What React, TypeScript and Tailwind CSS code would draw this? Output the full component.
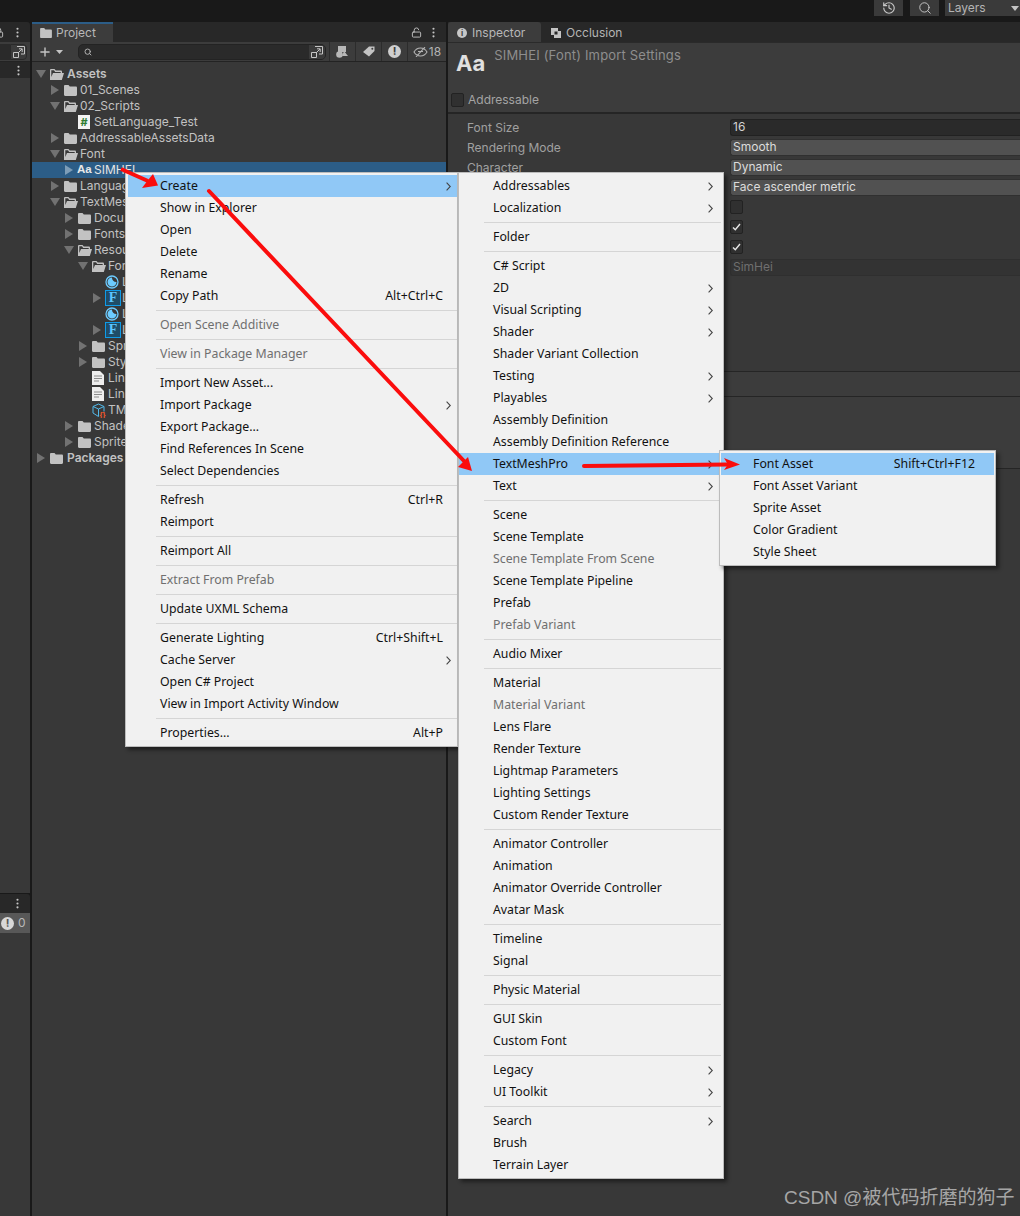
import { Fragment } from "react";
import { History, Search, Lock, LockOpen, MoreVertical, Plus } from "lucide-react";

type Item = { t: string; sub?: boolean; off?: boolean; on?: boolean; key?: string } | "-";

const rootMenu: Item[] = [
  { t: "Create", sub: true, on: true },
  { t: "Show in Explorer" },
  { t: "Open" },
  { t: "Delete" },
  { t: "Rename" },
  { t: "Copy Path", key: "Alt+Ctrl+C" },
  "-",
  { t: "Open Scene Additive", off: true },
  "-",
  { t: "View in Package Manager", off: true },
  "-",
  { t: "Import New Asset..." },
  { t: "Import Package", sub: true },
  { t: "Export Package..." },
  { t: "Find References In Scene" },
  { t: "Select Dependencies" },
  "-",
  { t: "Refresh", key: "Ctrl+R" },
  { t: "Reimport" },
  "-",
  { t: "Reimport All" },
  "-",
  { t: "Extract From Prefab", off: true },
  "-",
  { t: "Update UXML Schema" },
  "-",
  { t: "Generate Lighting", key: "Ctrl+Shift+L" },
  { t: "Cache Server", sub: true },
  { t: "Open C# Project" },
  { t: "View in Import Activity Window" },
  "-",
  { t: "Properties...", key: "Alt+P" },
];

const createMenu: Item[] = [
  { t: "Addressables", sub: true },
  { t: "Localization", sub: true },
  "-",
  { t: "Folder" },
  "-",
  { t: "C# Script" },
  { t: "2D", sub: true },
  { t: "Visual Scripting", sub: true },
  { t: "Shader", sub: true },
  { t: "Shader Variant Collection" },
  { t: "Testing", sub: true },
  { t: "Playables", sub: true },
  { t: "Assembly Definition" },
  { t: "Assembly Definition Reference" },
  { t: "TextMeshPro", sub: true, on: true },
  { t: "Text", sub: true },
  "-",
  { t: "Scene" },
  { t: "Scene Template" },
  { t: "Scene Template From Scene", off: true },
  { t: "Scene Template Pipeline" },
  { t: "Prefab" },
  { t: "Prefab Variant", off: true },
  "-",
  { t: "Audio Mixer" },
  "-",
  { t: "Material" },
  { t: "Material Variant", off: true },
  { t: "Lens Flare" },
  { t: "Render Texture" },
  { t: "Lightmap Parameters" },
  { t: "Lighting Settings" },
  { t: "Custom Render Texture" },
  "-",
  { t: "Animator Controller" },
  { t: "Animation" },
  { t: "Animator Override Controller" },
  { t: "Avatar Mask" },
  "-",
  { t: "Timeline" },
  { t: "Signal" },
  "-",
  { t: "Physic Material" },
  "-",
  { t: "GUI Skin" },
  { t: "Custom Font" },
  "-",
  { t: "Legacy", sub: true },
  { t: "UI Toolkit", sub: true },
  "-",
  { t: "Search", sub: true },
  { t: "Brush" },
  { t: "Terrain Layer" },
];

const tmpMenu: Item[] = [
  { t: "Font Asset", on: true, key: "Shift+Ctrl+F12" },
  { t: "Font Asset Variant" },
  { t: "Sprite Asset" },
  { t: "Color Gradient" },
  { t: "Style Sheet" },
];

type Icon = "folder" | "open" | "script" | "font" | "ring" | "sdf" | "doc" | "cube";
type Row = { t: string; l: number; icon: Icon; arrow?: "r" | "d"; bold?: boolean; sel?: boolean };

// labels stop where the context menu covers them
const tree: Row[] = [
  { t: "Assets", l: 0, icon: "open", arrow: "d", bold: true },
  { t: "01_Scenes", l: 1, icon: "folder", arrow: "r" },
  { t: "02_Scripts", l: 1, icon: "open", arrow: "d" },
  { t: "SetLanguage_Test", l: 2, icon: "script" },
  { t: "AddressableAssetsData", l: 1, icon: "folder", arrow: "r" },
  { t: "Font", l: 1, icon: "open", arrow: "d" },
  { t: "SIMHEI", l: 2, icon: "font", arrow: "r", sel: true },
  { t: "Languag", l: 1, icon: "folder", arrow: "r" },
  { t: "TextMes", l: 1, icon: "open", arrow: "d" },
  { t: "Docu", l: 2, icon: "folder", arrow: "r" },
  { t: "Fonts", l: 2, icon: "folder", arrow: "r" },
  { t: "Resou", l: 2, icon: "open", arrow: "d" },
  { t: "For", l: 3, icon: "open", arrow: "d" },
  { t: "L", l: 4, icon: "ring" },
  { t: "L", l: 4, icon: "sdf", arrow: "r" },
  { t: "L", l: 4, icon: "ring" },
  { t: "L", l: 4, icon: "sdf", arrow: "r" },
  { t: "Spr", l: 3, icon: "folder", arrow: "r" },
  { t: "Sty", l: 3, icon: "folder", arrow: "r" },
  { t: "Lin", l: 3, icon: "doc" },
  { t: "Lin", l: 3, icon: "doc" },
  { t: "TM", l: 3, icon: "cube" },
  { t: "Shade", l: 2, icon: "folder", arrow: "r" },
  { t: "Sprite", l: 2, icon: "folder", arrow: "r" },
  { t: "Packages", l: 0, icon: "folder", arrow: "r", bold: true },
];

const indent = ["pl-[4px]", "pl-[18px]", "pl-[32px]", "pl-[46px]", "pl-[60px]"];

function TreeIcon({ kind }: { kind: Icon }) {
  if (kind === "folder")
    return (
      <svg width="13" height="11" viewBox="0 0 13 11" fill="#c2c2c2">
        <path d="M0 1.2C0 .5.5 0 1.2 0h3.3l1.3 1.6h6c.7 0 1.2.5 1.2 1.2v7c0 .7-.5 1.2-1.2 1.2H1.2C.5 11 0 10.500 0 9.800z" />
      </svg>
    );
  if (kind === "open")
    return (
      <svg width="14" height="11" viewBox="0 0 14 11" fill="#c2c2c2">
        <path d="M0 1.200C0 .5.500 0 1.200 0h3.300l1.300 1.600h5c.7 0 1.200.5 1.200 1.200V4h-1.300V3H5.200L4 1.300H1.300V8L3 4h11l-2.200 7H0z" />
      </svg>
    );
  if (kind === "font")
    return <span className="-ml-[1px] font-['Liberation_Sans'] text-[11.5px] font-bold leading-none text-[#e8e8e8]">Aa</span>;
  if (kind === "script")
    return (
      <span className="flex h-[14px] w-[12px] items-center justify-center bg-[#f4f4f4] text-[11px] font-bold leading-none text-[#2e7d32]">#</span>
    );
  if (kind === "ring")
    return (
      <svg width="14" height="14" viewBox="0 0 14 14">
        <circle cx="7" cy="7" r="6" fill="none" stroke="#6ccbff" strokeWidth="1.300" />
        <path d="M7 2.500a4.500 4.500 0 1 0 4.500 4.500A4.200 4.200 0 0 1 7 2.500z" fill="#6ccbff" />
      </svg>
    );
  if (kind === "sdf")
    return (
      <span className="flex h-[16px] w-[16px] items-center justify-center border border-[#0f9be8] bg-[#1f4d68] font-['Liberation_Serif'] text-[14px] font-bold leading-none text-[#5cc6ff]">F</span>
    );
  if (kind === "doc")
    return (
      <svg width="12" height="14" viewBox="0 0 12 14">
        <path d="M0 0h8l4 4v10H0z" fill="#eeeeee" />
        <path d="M2 5h8M2 7.500h8M2 10h5" stroke="#8a8a8a" strokeWidth="1" />
      </svg>
    );
  return (
    <svg width="16" height="15" viewBox="0 0 16 15">
      <path d="M1 3.500 6.500 1 12 3.500v5M1 3.500V10l5.500 3.500V6zM6.500 6 12 3.500" fill="none" stroke="#52b8ea" strokeWidth="1" />
      <text x="7.500" y="14" fontSize="8" fontWeight="700" fill="#f0592b" fontFamily="Liberation Sans">{"{}"}</text>
    </svg>
  );
}

function TreeRow({ row }: { row: Row }) {
  return (
    <div className={`flex h-4 items-center ${indent[row.l]} ${row.sel ? "bg-[#2c5d87] text-[#e4e4e4]" : ""}`}>
      <span className="flex w-[14px] shrink-0 items-center">
        {row.arrow === "r" && (
          <svg width="8" height="10" viewBox="0 0 8 10" className="ml-[1px]"><path d="M0 0l8 5-8 5z" fill={row.sel ? "#7d9db8" : "#727272"} /></svg>
        )}
        {row.arrow === "d" && (
          <svg width="10" height="8" viewBox="0 0 10 8"><path d="M0 0h10L5 8z" fill="#727272" /></svg>
        )}
      </span>
      <span className={`flex shrink-0 items-center ${row.l === 4 ? "-ml-[1px] w-[17px]" : row.bold ? "w-[17px]" : "w-[16px]"}`}>
        <TreeIcon kind={row.icon} />
      </span>
      <span className={`whitespace-nowrap ${row.bold ? "font-semibold" : ""}`}>{row.t}</span>
    </div>
  );
}

function Chevron({ className = "" }: { className?: string }) {
  return (
    <svg width="5" height="9" viewBox="0 0 5 9" className={`shrink-0 ${className}`}>
      <path d="M.6.6 4.300 4.500.6 8.400" fill="none" stroke="#444444" strokeWidth="1.100" />
    </svg>
  );
}

function Menu({ items, box, rowPad, sepPad, chevron = "" }: { items: Item[]; box: string; rowPad: string; sepPad: string; chevron?: string }) {
  return (
    <div className={`absolute border border-[#bcbcbc] bg-[#f1f1f1] py-[2px] font-['Noto_Sans'] text-[12.3px] text-[#111111] shadow-[3px_3px_4px_rgba(0,0,0,0.45)] ${box}`}>
      {items.map((it, i) =>
        it === "-" ? (
          <div key={i} className={`flex h-[7px] items-center ${sepPad}`}>
            <div className="h-[1px] w-full bg-[#d5d5d5]" />
          </div>
        ) : (
          <div key={i} className={`flex h-[22px] items-center justify-between leading-none ${rowPad} ${it.on ? "bg-[#90c8f6]" : ""} ${it.off ? "text-[#6f6f6f]" : ""}`}>
            <span className="whitespace-nowrap">{it.t}</span>
            {it.key && <span className="whitespace-nowrap">{it.key}</span>}
            {it.sub && <Chevron className={chevron} />}
          </div>
        )
      )}
    </div>
  );
}

function Check({ on }: { on?: boolean }) {
  return (
    <div className="flex h-[14px] w-[13px] items-center justify-center rounded-[2px] border border-[#222222] bg-[#303030]">
      {on && (
        <svg width="9" height="8" viewBox="0 0 9 8"><path d="M1 4.500 3.300 6.800 8 1" fill="none" stroke="#e4e4e4" strokeWidth="1.400" /></svg>
      )}
    </div>
  );
}

function PopoutBtn({ box }: { box: string }) {
  return (
    <div className={`flex items-center justify-center ${box}`}>
      <svg width="12" height="12" viewBox="0 0 12 12" fill="none" stroke="#c4c4c4" strokeWidth="1">
        <path d="M4 .5h7.500V8H8M.5 6.500h5v5h-5zM5 7l4-4M6 2.800h3.200V6" />
      </svg>
    </div>
  );
}

const fieldBox = "flex h-[17px] items-center rounded-l-[3px] border border-r-0 pl-[2px]";
const rows: { label?: string; el: React.ReactNode }[] = [
  { label: "Font Size", el: <div className={`${fieldBox} border-[#212121] bg-[#2a2a2a] text-[#d2d2d2]`}>16</div> },
  { label: "Rendering Mode", el: <div className={`${fieldBox} border-[#303030] bg-[#515151] text-[#dcdcdc]`}>Smooth</div> },
  { label: "Character", el: <div className={`${fieldBox} border-[#303030] bg-[#515151] text-[#dcdcdc]`}>Dynamic</div> },
  { el: <div className={`${fieldBox} border-[#303030] bg-[#515151] text-[#dcdcdc]`}>Face ascender metric</div> },
  { el: <Check /> },
  { el: <Check on /> },
  { el: <Check on /> },
  { el: <div className={`${fieldBox} border-[#2f2f2f] bg-[#333333] text-[#6f6f6f]`}>SimHei</div> },
];

export default function App() {
  return (
    <div className="relative flex h-[1216px] w-[1020px] flex-col overflow-hidden bg-[#191919] font-['Inter'] text-[12px] text-[#c2c2c2]">
      {/* top toolbar */}
      <div className="flex h-[22px] shrink-0 items-start justify-end">
        <div className="flex h-[16px] w-[29px] items-center justify-center bg-[#3a3a3a]"><History size={14} strokeWidth={2} color="#c8c8c8" /></div>
        <div className="ml-[7px] flex h-[16px] w-[29px] items-center justify-center bg-[#3a3a3a]"><Search size={14} strokeWidth={1.600} color="#c8c8c8" /></div>
        <div className="ml-[6px] flex h-[16px] w-[75px] items-center justify-between bg-[#3a3a3a] pl-[3px] pr-[1px] text-[#b4b4b4]">
          <span>Layers</span>
          <svg width="8" height="5" viewBox="0 0 8 5"><path d="M0 0h8L4 5z" fill="#c4c4c4" /></svg>
        </div>
      </div>

      <div className="flex min-h-0 flex-1">
        {/* cut-off hierarchy column */}
        <div className="flex w-[30px] shrink-0 flex-col">
          <div className="flex h-[20px] items-center justify-between rounded-tr-[3px] bg-[#282828] pr-[6px]">
            <span className="-ml-[7px]"><Lock size={11} color="#c4c4c4" /></span>
            <MoreVertical size={13} color="#c4c4c4" />
          </div>
          <div className="flex h-[20px] items-center border-b border-[#232323] bg-[#3c3c3c] pr-[3px]">
            <div className="h-[16px] flex-1 bg-[#2a2a2a]" />
            <PopoutBtn box="h-[16px] w-[17px] rounded-r-[4px] border border-[#2a2a2a]" />
          </div>
          <div className="flex h-[16px] items-center justify-end bg-[#282828] pr-[5px]">
            <MoreVertical size={13} color="#c4c4c4" />
          </div>
          <div className="h-[815px] bg-[#383838]" />
          <div className="h-[1px] bg-[#191919]" />
          <div className="flex h-[19px] items-center justify-end rounded-tr-[3px] bg-[#282828] pr-[6px]">
            <MoreVertical size={13} color="#c4c4c4" />
          </div>
          <div className="flex h-[20px] items-center gap-[4px] bg-[#585858] pl-[1px] text-[#b8b8b8]">
            <span className="flex h-[13px] w-[13px] items-center justify-center rounded-full bg-[#d8d8d8] text-[11px] font-bold leading-none text-[#585858]">!</span>
            <span>0</span>
          </div>
          <div className="flex-1 bg-[#383838]" />
        </div>

        {/* project */}
        <div className="ml-[2px] flex w-[414px] shrink-0 flex-col">
          <div className="flex h-[20px] items-stretch justify-between bg-[#282828]">
            <div className="flex w-[81px] items-center gap-[4px] border-t-2 border-[#2c5d87] bg-[#3c3c3c] pl-[8px] text-[#b8b8b8]">
              <svg width="12" height="10" viewBox="0 0 13 11" fill="#c2c2c2"><path d="M0 1.200C0 .5.500 0 1.200 0h3.300l1.300 1.600h6c.7 0 1.200.5 1.200 1.200v7c0 .7-.5 1.200-1.200 1.200H1.200C.5 11 0 10.500 0 9.800z" /></svg>
              <span>Project</span>
            </div>
            <div className="flex items-center gap-[5px] pr-[6px]">
              <LockOpen size={11} color="#c4c4c4" />
              <MoreVertical size={13} color="#c4c4c4" />
            </div>
          </div>
          <div className="flex h-[20px] items-center border-b border-[#232323] bg-[#3c3c3c]">
            <span className="ml-[6px]"><Plus size={14} strokeWidth={2.400} color="#c4c4c4" /></span>
            <svg width="7" height="4" viewBox="0 0 7 4" className="ml-[4px]"><path d="M0 0h7L3.500 4z" fill="#c4c4c4" /></svg>
            <div className="ml-[15px] flex h-[16px] w-[248px] items-center justify-between rounded-[5px] border border-[#232323] bg-[#2a2a2a] pl-[5px]">
              <Search size={8} strokeWidth={3} color="#b0b0b0" />
              <PopoutBtn box="h-[14px] w-[16px] bg-[#3a3a3a] rounded-r-[4px]" />
            </div>
            <div className="ml-[3px] flex h-full w-[26px] items-center justify-center border-l border-[#2c2c2c]">
              <svg width="13" height="12" viewBox="0 0 13 12" fill="#b8b8b8"><rect x="2" y="0" width="8" height="6" /><circle cx="3.500" cy="8.500" r="3.300" /><path d="M8 5l4 5H6z" /></svg>
            </div>
            <div className="flex h-full w-[26px] items-center justify-center border-l border-[#2c2c2c]">
              <svg width="12" height="11" viewBox="0 0 12 11"><path d="M0 6 6 .5h5.500V5L6 10.500z" fill="#c4c4c4" /><circle cx="9.300" cy="2.700" r="1" fill="#3c3c3c" /></svg>
            </div>
            <div className="flex h-full w-[26px] items-center justify-center border-l border-[#2c2c2c]">
              <span className="flex h-[13px] w-[13px] items-center justify-center rounded-full bg-[#cfcfcf] text-[11px] font-bold leading-none text-[#3c3c3c]">!</span>
            </div>
            <div className="flex h-full flex-1 items-center justify-center gap-[1px] border-l border-[#2c2c2c] text-[#b4b4b4]">
              <svg width="15" height="10" viewBox="0 0 15 10" fill="none" stroke="#b4b4b4" strokeWidth="1.100"><path d="M1 5c2-3.500 4-4 6.500-4s4.500.5 6.500 4c-2 3.500-4 4-6.500 4S3 8.500 1 5zM3 10 12 0M5 4.500h5" /></svg>
              <span>18</span>
            </div>
          </div>
          <div className="flex-1 bg-[#383838] pt-[4px]">
            {tree.map((r, i) => (
              <Fragment key={i}><TreeRow row={r} /></Fragment>
            ))}
          </div>
        </div>

        {/* inspector */}
        <div className="ml-[2px] flex min-w-0 flex-1 flex-col">
          <div className="flex h-[20px] items-stretch bg-[#282828]">
            <div className="flex w-[93px] items-center gap-[5px] rounded-t-[3px] bg-[#3c3c3c] pl-[9px] pt-[2px] text-[#b8b8b8]">
              <span className="flex h-[10px] w-[10px] items-center justify-center rounded-full bg-[#c8c8c8] text-[8px] font-bold leading-none text-[#3c3c3c]">i</span>
              <span>Inspector</span>
            </div>
            <div className="ml-[10px] flex items-center gap-[5px] pt-[2px] text-[#b4b4b4]">
              <svg width="10" height="10" viewBox="0 0 10 10"><rect x="0" y="0" width="7" height="7" fill="#c4c4c4" /><rect x="3" y="3" width="7" height="7" fill="#c4c4c4" /><rect x="3.500" y="3.500" width="3" height="3" fill="#282828" /></svg>
              <span>Occlusion</span>
            </div>
          </div>
          <div className="h-[1px] bg-[#2a2a2a]" />
          <div className="relative h-[71px] border-b-2 border-[#252525] bg-[#3c3c3c]">
            <div className="flex h-[48px] items-start">
              <span className="ml-[8px] mt-[6px] text-[22px] font-bold leading-[28px] text-[#e0e0e0]">Aa</span>
              <span className="ml-[9px] mt-[3px] text-[13px] leading-[18px] tracking-[0.18px] text-[#8e8e8e]">SIMHEI (Font) Import Settings</span>
            </div>
            <div className="flex items-center gap-[4px] pl-[3px] text-[#a4a4a4]">
              <Check />
              <span>Addressable</span>
            </div>
          </div>
          <div className="flex-1 bg-[#383838]">
            <div className="h-[257px] pt-[4px]">
              {rows.map((r, i) => (
                <div key={i} className="flex h-[20px] items-center">
                  <span className="w-[282px] shrink-0 pl-[19px] text-[#a0a0a0]">{r.label}</span>
                  <div className="-mt-[2px] flex-1">{r.el}</div>
                </div>
              ))}
            </div>
            <div className="h-[26px] border-y border-[#252525] bg-[#3c3c3c]" />
            <div className="h-[72px] border-b border-[#252525] bg-[#3c3c3c]" />
          </div>
        </div>
      </div>

      {/* context menus */}
      <Menu items={rootMenu} box="left-[125px] top-[172px] w-[333px]" rowPad="ml-[2px] pl-[32px] pr-[14px]" sepPad="pl-[30px]" chevron="-mr-[8px]" />
      <Menu items={createMenu} box="left-[458px] top-[172px] w-[266px]" rowPad="pl-[34px] pr-[10px]" sepPad="pl-[25px] pr-[2px]" />
      <Menu items={tmpMenu} box="left-[719px] top-[450px] w-[277px]" rowPad="mx-[1px] pl-[32px] pr-[19px]" sepPad="pl-[25px]" />

      {/* red annotation arrows */}
      <svg className="pointer-events-none absolute left-0 top-0" width="1020" height="1216" viewBox="0 0 1020 1216">
        <path d="M121 169 148 181" stroke="#fb0d0d" strokeWidth="4" />
        <path d="M158 185.500 142 188 148 180 153 174z" fill="#fb0d0d" />
        <path d="M209 191 464 461" stroke="#fb0d0d" strokeWidth="4" strokeLinecap="round" />
        <path d="M472 471 458 467 468 457z" fill="#fb0d0d" />
        <path d="M584 466 728 464.500" stroke="#fb0d0d" strokeWidth="4" strokeLinecap="round" />
        <path d="M740 464.500 724 470 728 464.500 724 458z" fill="#fb0d0d" />
      </svg>

      <span className="absolute left-[784px] top-[1185px] font-['Liberation_Sans','Noto_Sans_CJK_SC',sans-serif] text-[19px] leading-[26px] text-[#a6a6a6]">CSDN @被代码折磨的狗子</span>
    </div>
  );
}
